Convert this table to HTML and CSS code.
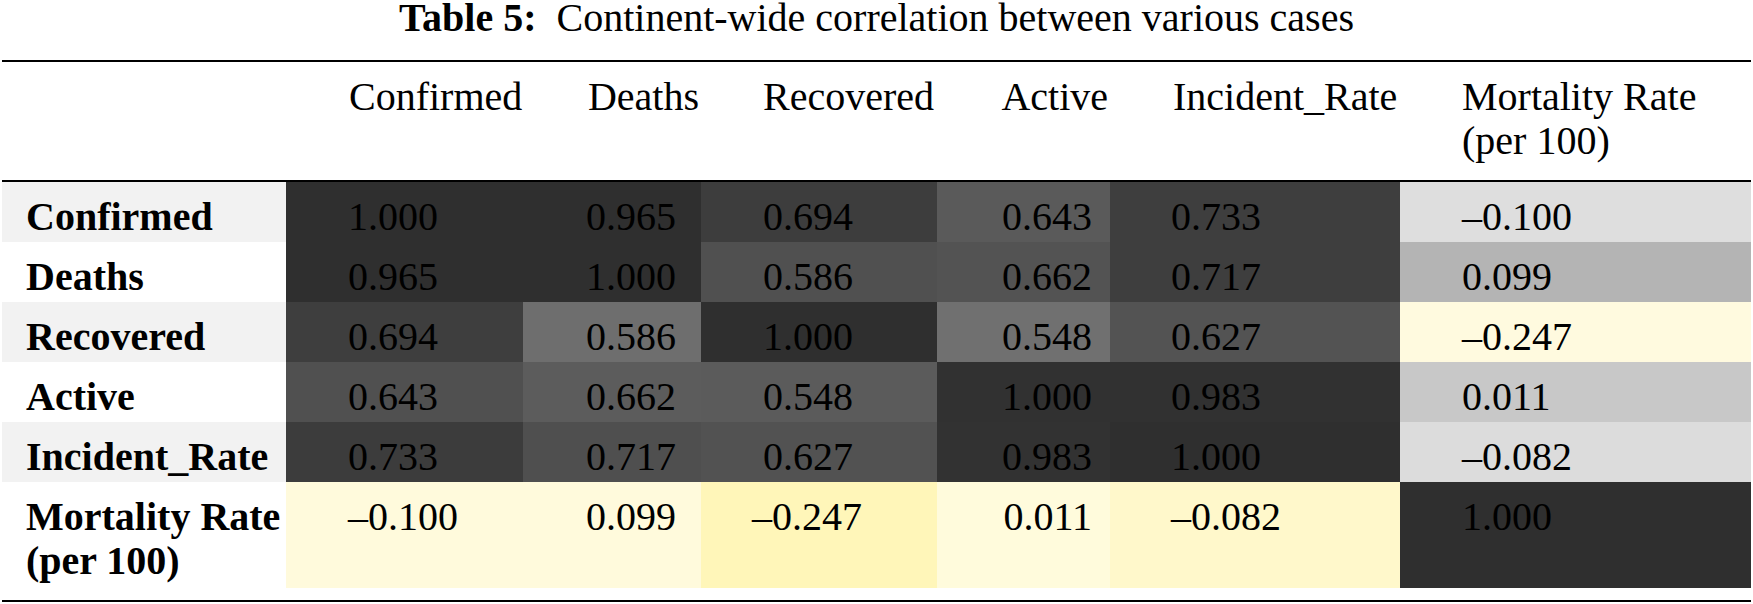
FILE: index.html
```html
<!DOCTYPE html>
<html>
<head>
<meta charset="utf-8">
<link rel="stylesheet" href="styles.css">
</head>
<body>
<div class="page">
  <div class="caption"><b>Table 5:</b>&nbsp; Continent-wide correlation between various cases</div>
  <div class="table">
    <div class="hd lbl"></div>
    <div class="hd c1">Confirmed</div>
    <div class="hd c2">Deaths</div>
    <div class="hd c3">Recovered</div>
    <div class="hd c4">Active</div>
    <div class="hd c5">Incident_Rate</div>
    <div class="hd c6">Mortality Rate<br>(per 100)</div>

    <div class="cell lbl odd">Confirmed</div>
    <div class="cell c1" style="background:#2f2f2f">1.000</div>
    <div class="cell c2" style="background:#2f2f2f">0.965</div>
    <div class="cell c3" style="background:#3d3d3d">0.694</div>
    <div class="cell c4" style="background:#5a5a5a">0.643</div>
    <div class="cell c5" style="background:#3e3e3e">0.733</div>
    <div class="cell c6" style="background:#dedede">&ndash;0.100</div>

    <div class="cell lbl">Deaths</div>
    <div class="cell c1" style="background:#2f2f2f">0.965</div>
    <div class="cell c2" style="background:#2f2f2f">1.000</div>
    <div class="cell c3" style="background:#505050">0.586</div>
    <div class="cell c4" style="background:#535353">0.662</div>
    <div class="cell c5" style="background:#3e3e3e">0.717</div>
    <div class="cell c6" style="background:#b4b4b4">0.099</div>

    <div class="cell lbl odd">Recovered</div>
    <div class="cell c1" style="background:#3e3e3e">0.694</div>
    <div class="cell c2" style="background:#6e6e6e">0.586</div>
    <div class="cell c3" style="background:#2f2f2f">1.000</div>
    <div class="cell c4" style="background:#707070">0.548</div>
    <div class="cell c5" style="background:#535353">0.627</div>
    <div class="cell c6" style="background:#fffadf">&ndash;0.247</div>

    <div class="cell lbl">Active</div>
    <div class="cell c1" style="background:#505050">0.643</div>
    <div class="cell c2" style="background:#5c5c5c">0.662</div>
    <div class="cell c3" style="background:#5b5b5b">0.548</div>
    <div class="cell c4" style="background:#313131">1.000</div>
    <div class="cell c5" style="background:#313131">0.983</div>
    <div class="cell c6" style="background:#c8c8c8">0.011</div>

    <div class="cell lbl odd">Incident_Rate</div>
    <div class="cell c1" style="background:#3c3c3c">0.733</div>
    <div class="cell c2" style="background:#4f4f4f">0.717</div>
    <div class="cell c3" style="background:#525252">0.627</div>
    <div class="cell c4" style="background:#323232">0.983</div>
    <div class="cell c5" style="background:#2f2f2f">1.000</div>
    <div class="cell c6" style="background:#dcdcdc">&ndash;0.082</div>

    <div class="cell lbl">Mortality Rate<br>(per 100)</div>
    <div class="cell c1" style="background:#fffadc">&ndash;0.100</div>
    <div class="cell c2" style="background:#fffadc">0.099</div>
    <div class="cell c3 hang" style="background:#fff6b9">&ndash;0.247</div>
    <div class="cell c4" style="background:#fffbdc">0.011</div>
    <div class="cell c5" style="background:#fff8cb">&ndash;0.082</div>
    <div class="cell c6" style="background:#2f2f2f">1.000</div>
  </div>
</div>
</body>
</html>
```

FILE: styles.css
```css
html, body {
  margin: 0;
  padding: 0;
  background: #ffffff;
}

body {
  font-family: "Liberation Serif", "Times New Roman", serif;
  font-size: 40px;
  color: #000000;
}

.page {
  width: 1753px;
  padding-left: 2px;
  box-sizing: border-box;
}

.caption {
  height: 60px;
  line-height: 36px;
  text-align: center;
  padding-right: 2px;
  box-sizing: border-box;
  white-space: nowrap;
}

.caption b {
  font-weight: bold;
}

.table {
  width: 1749px;
  display: grid;
  grid-template-columns: 284px 237px 178px 236px 173px 290px 351px;
  grid-template-rows: 120px 60px 60px 60px 60px 60px 106px;
  border-top: 2px solid #000;
  border-bottom: 2px solid #000;
  padding-bottom: 12px;
}

.hd {
  box-sizing: border-box;
  border-bottom: 2px solid #000;
  padding-top: 13px;
  line-height: 44px;
  white-space: nowrap;
}

.cell {
  box-sizing: border-box;
  padding-top: 13px;
  line-height: 44px;
  white-space: nowrap;
}

.lbl {
  font-weight: bold;
  padding-left: 24px;
}

.lbl.odd {
  background: #f2f2f2;
}

.hd.lbl {
  font-weight: normal;
}

.c1 { padding-left: 62px; }
.hd.c1 { padding-left: 63px; }

.c2 { text-align: right; padding-right: 25px; }
.hd.c2 { padding-right: 2px; }

.c3 { padding-left: 62px; }
.c3.hang { padding-left: 51px; }

.c4 { text-align: right; padding-right: 18px; }
.hd.c4 { padding-right: 2px; }

.c5 { padding-left: 61px; }
.hd.c5 { padding-left: 63px; }

.c6 { padding-left: 62px; }
```
